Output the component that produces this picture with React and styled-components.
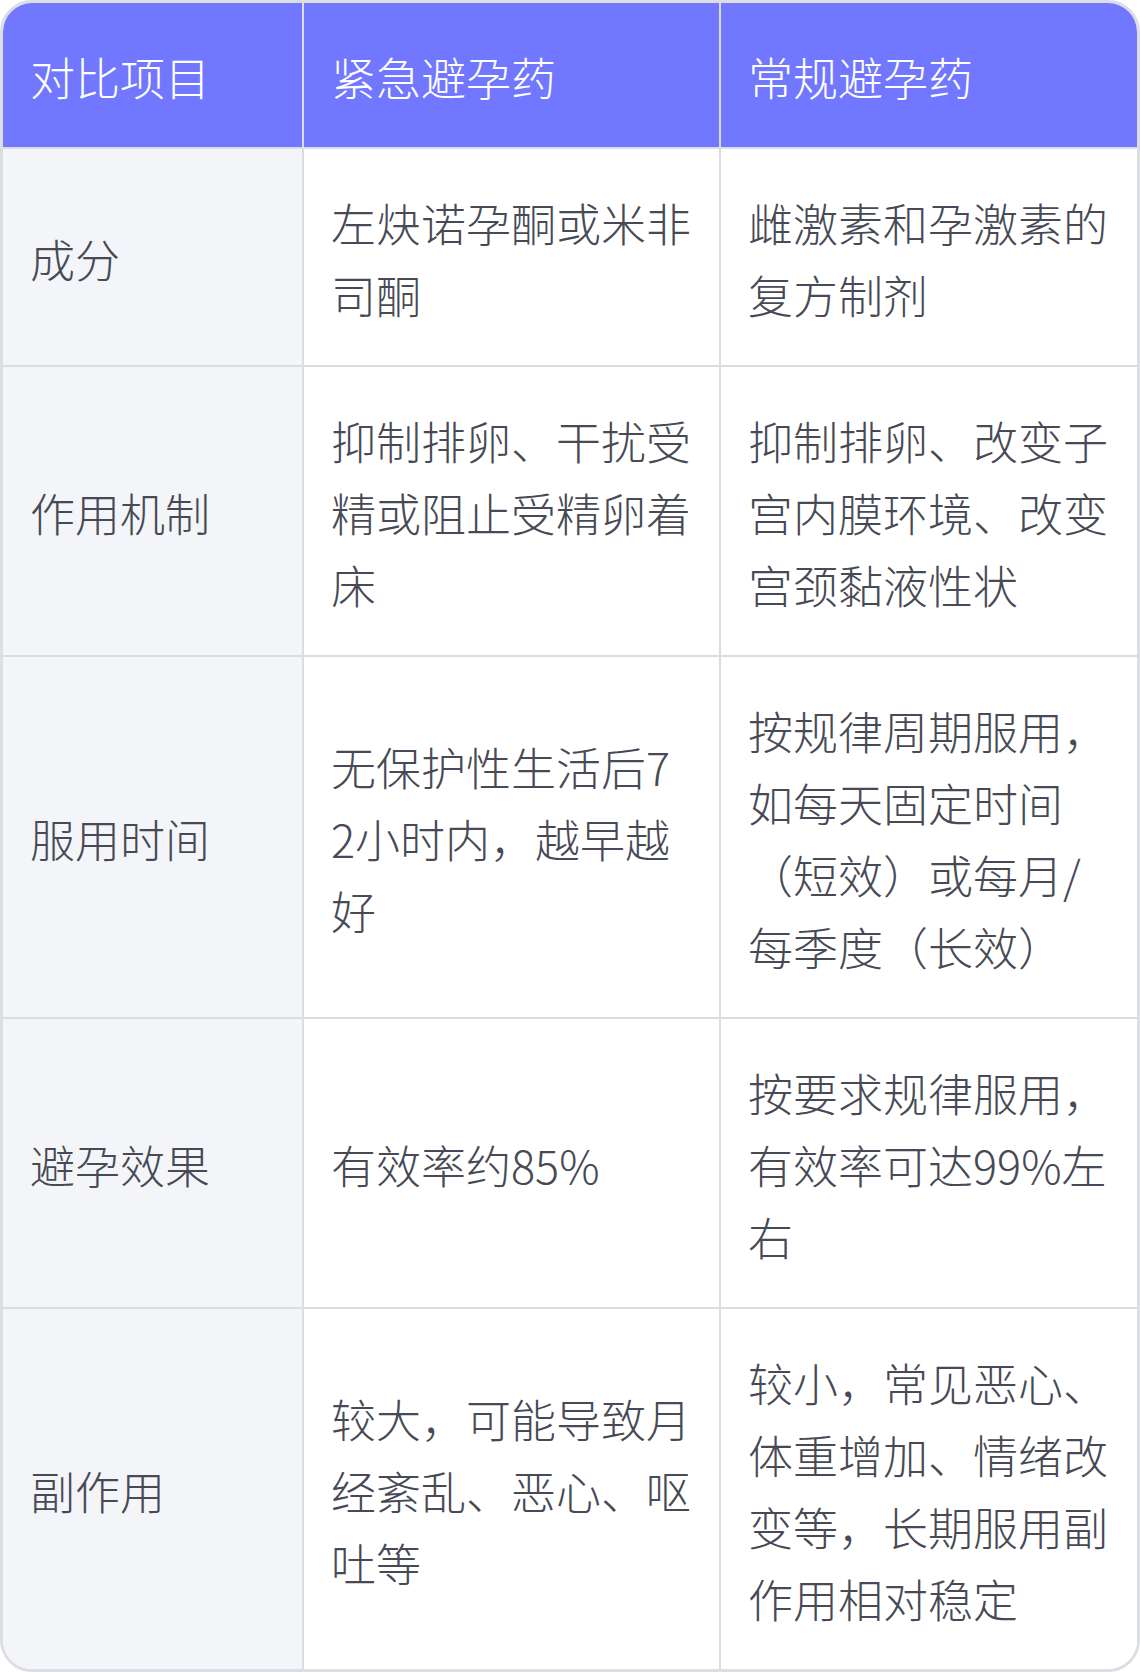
import React from 'react';
import styled, {createGlobalStyle} from 'styled-components';

const GlobalStyle = createGlobalStyle`
  html, body {
    margin: 0;
    padding: 0;
    background: #ffffff;
  }
  body {
    font-family: "Noto Sans CJK SC", "Noto Sans", sans-serif;
  }
`;

const TableFrame = styled.div`
  width: 1140px;
  box-sizing: border-box;
  border: 3px solid #dddee3;
  border-radius: 32px;
  overflow: hidden;
  background: #ffffff;
`;

const Grid = styled.div`
  display: grid;
  grid-template-columns: 301px 417px 416px;
`;

const Cell = styled.div`
  display: flex;
  align-items: center;
  box-sizing: border-box;
  padding: 38px 27px 34px;
  font-size: 45px;
  font-weight: 300;
  line-height: 72px;
  word-break: break-all;
  color: ${p => (p.$head ? '#ffffff' : '#474a55')};
  background: ${p => (p.$head ? '#7177ff' : p.$label ? '#f4f5f9' : '#ffffff')};
  border-right: ${p => (p.$last ? 'none' : '2px solid #dcdde2')};
  border-bottom: ${p => (p.$bottom ? 'none' : '2px solid #dcdde2')};
`;

const head = ['对比项目', '紧急避孕药', '常规避孕药'];

const rows = [
	['成分', '左炔诺孕酮或米非司酮', '雌激素和孕激素的复方制剂'],
	['作用机制', '抑制排卵、干扰受精或阻止受精卵着床', '抑制排卵、改变子宫内膜环境、改变宫颈黏液性状'],
	['服用时间', '无保护性生活后72小时内，越早越好', '按规律周期服用，如每天固定时间（短效）或每月/每季度（长效）'],
	['避孕效果', '有效率约85%', '按要求规律服用，有效率可达99%左右'],
	['副作用', '较大，可能导致月经紊乱、恶心、呕吐等', '较小，常见恶心、体重增加、情绪改变等，长期服用副作用相对稳定'],
];

export default function App() {
	return (
		<>
			<GlobalStyle/>
			<TableFrame>
				<Grid>
					{head.map((h, i) => (
						<Cell key={h} $head $last={i === 2}>{h}</Cell>
					))}
					{rows.map((row, r) =>
						row.map((text, c) => (
							<Cell
								key={r + '-' + c}
								$label={c === 0}
								$last={c === 2}
								$bottom={r === rows.length - 1}
							>
								{text}
							</Cell>
						))
					)}
				</Grid>
			</TableFrame>
		</>
	);
}
